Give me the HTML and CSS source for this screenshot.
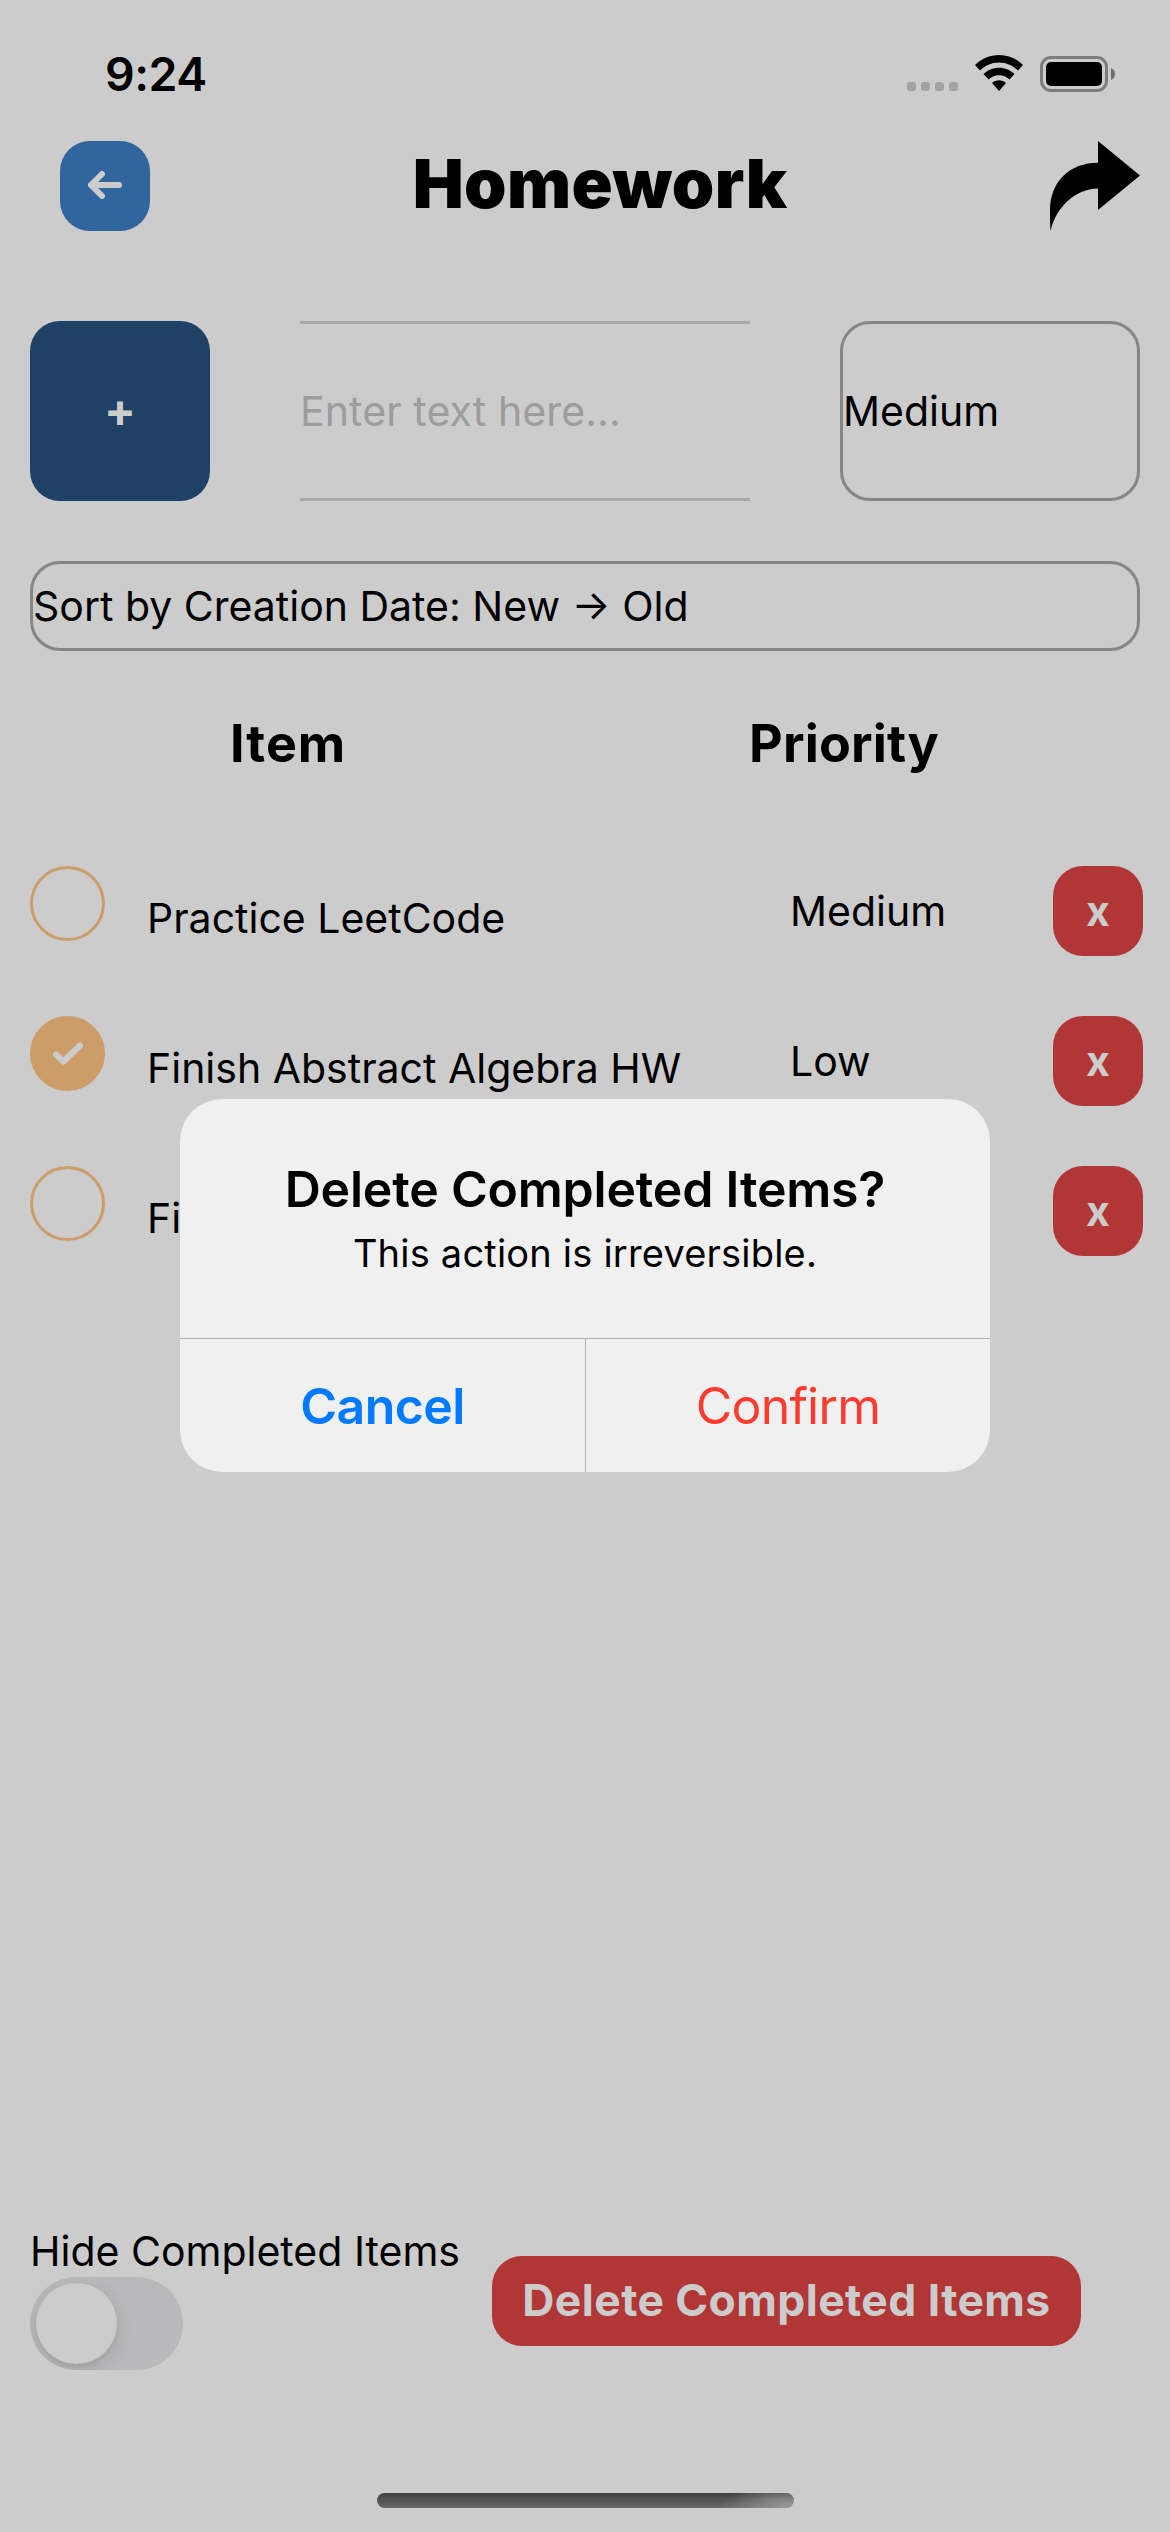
FILE: index.html
```html
<!DOCTYPE html>
<html lang="en">
<head>
<meta charset="utf-8">
<title>Homework</title>
<link rel="stylesheet" href="styles.css">
</head>
<body>
<div class="screen">
  <header class="status">
    <span class="time">9:24</span>
    <div class="indicators">
      <div class="signal"><i></i><i></i><i></i><i></i></div>
      <svg class="wifi" viewBox="0 0 48 36"><path d="M24 0C33 0 41.500 3.500 48 10L43 15.500C38 10.500 31.500 7.500 24 7.500S10 10.500 5 15.500L0 10C6.500 3.500 15 0 24 0ZM24 12.700C30 12.700 35.500 15 39.500 19L34.500 24.500C31.500 21.700 28 20.200 24 20.200S16.500 21.700 13.500 24.500L8.500 19C12.500 15 18 12.700 24 12.700ZM24 25.200C26.700 25.200 29 26.200 31 28L24 36L17 28C19 26.200 21.300 25.200 24 25.200Z"/></svg>
      <div class="battery"><i class="cell"><b></b></i><svg class="nub" viewBox="0 0 4 12"><path d="M0 0C5.300 2 5.300 10 0 12Z"/></svg></div>
    </div>
  </header>
  <div class="titlebar">
    <button class="back"><svg viewBox="0 0 34 28"><path d="M3 14H31M14 3L3 14L14 25"/></svg></button>
    <h1>Homework</h1>
    <svg class="share" viewBox="0 0 90 90"><path d="M48 0L90 34.500L48 69V47.500C25 48 6 66 .6 90C0 83 0 77 0 70C0 40 20 21.700 48 21.700Z"/></svg>
  </div>
  <div class="entry">
    <button class="add">+</button>
    <div class="field">Enter text here...</div>
    <div class="picker">Medium</div>
  </div>
  <div class="sort">Sort by Creation Date: New → Old</div>
  <div class="heads"><h2 class="h-item">Item</h2><h2 class="h-prio">Priority</h2></div>
  <ul class="list">
    <li><span class="check"></span><span class="name">Practice LeetCode</span><span class="prio">Medium</span><button class="del">x</button></li>
    <li><span class="check done"><svg viewBox="0 0 30 23"><path d="M3 12.500L10.500 19.500L27 3.500"/></svg></span><span class="name">Finish Abstract Algebra HW</span><span class="prio">Low</span><button class="del">x</button></li>
    <li><span class="check"></span><span class="name">Fi</span><span class="prio"></span><button class="del">x</button></li>
  </ul>
  <footer class="footer">
    <div class="hide"><span class="hide-label">Hide Completed Items</span><span class="toggle"><i></i></span></div>
    <button class="clear">Delete Completed Items</button>
  </footer>
  <div class="home"></div>
</div>
<div class="overlay">
  <div class="alert">
    <div class="message"><h3>Delete Completed Items?</h3><p>This action is irreversible.</p></div>
    <div class="actions"><button class="cancel">Cancel</button><button class="confirm">Confirm</button></div>
  </div>
</div>
</body>
</html>
```
FILE: styles.css
```css
* { box-sizing: border-box; margin: 0; padding: 0; }
body { width: 1170px; height: 2532px; background: #ccc; color: #000; font-family: Inter, "Liberation Sans", sans-serif; font-size: 41px; overflow: hidden; }
button { border: 0; font: inherit; color: #ccc; display: flex; align-items: center; justify-content: center; flex: none; }
.screen { width: 1170px; height: 2532px; display: flex; flex-direction: column; }
.status { height: 141px; padding: 47px 55px 0 105px; display: flex; justify-content: space-between; align-items: flex-start; }
.time { font-size: 46.500px; font-weight: 600; line-height: 54px; letter-spacing: -.5px; }
.indicators { display: flex; align-items: flex-start; padding-top: 8px; }
.signal { display: flex; gap: 5px; padding-top: 27px; margin-right: 17px; }
.signal i { width: 9px; height: 9px; border-radius: 3px; background: #a3a3a3; }
.wifi { width: 48px; height: 36px; margin-right: 17px; }
.battery { display: flex; align-items: center; gap: 3px; padding-top: 1px; }
.cell { width: 68px; height: 36px; border: 3px solid #7c7c7c; border-radius: 11px; padding: 3px; display: block; }
.cell b { display: block; height: 24px; border-radius: 5px; background: #000; }
.nub { width: 4px; height: 12px; fill: #6f6f6f; }
.titlebar { height: 90px; padding: 0 30px 0 60px; display: flex; justify-content: space-between; }
.back { width: 90px; height: 90px; border-radius: 30px; background: #31659d; }
.back svg { width: 34px; height: 28px; margin-top: -2px; fill: none; stroke: #ccc; stroke-width: 6; stroke-linecap: round; stroke-linejoin: round; }
h1 { font-size: 68px; font-weight: 900; line-height: 84px; letter-spacing: .4px; }
.share { width: 90px; height: 90px; }
.entry { margin-top: 90px; height: 180px; padding: 0 30px; display: flex; justify-content: space-between; }
.add { width: 180px; border-radius: 30px; background: #1f4165; font-size: 47px; font-weight: 700; padding-bottom: 3px; }
.field { width: 450px; border: solid #a8a8a8; border-width: 3px 0; color: #9d9d9d; line-height: 174px; letter-spacing: .1px; }
.picker { width: 300px; border: 3px solid #868686; border-radius: 30px; line-height: 174px; }
.sort { margin: 60px 30px 0; height: 90px; border: 3px solid #868686; border-radius: 30px; line-height: 84px; }
.heads { display: flex; margin-top: 60px; height: 66px; }
.heads h2 { font-size: 52px; font-weight: 700; line-height: 66px; letter-spacing: .2px; }
.heads .h-item { width: 520px; padding-left: 230px; letter-spacing: 1px; }
.h-prio { padding-left: 229px; }
.list { list-style: none; margin-top: 89px; display: grid; gap: 60px; }
.list li { height: 90px; padding: 0 27px 0 30px; display: flex; }
.check { width: 75px; height: 75px; border: 3px solid #cc9c69; border-radius: 50%; flex: none; display: flex; align-items: center; justify-content: center; }
.done { background: #cc9c69; }
.check svg { width: 30px; height: 23px; fill: none; stroke: #ccc; stroke-width: 6; stroke-linejoin: round; stroke-linecap: round; }
.name { width: 643px; margin-left: 42px; line-height: 104px; }
.prio { flex: 1; line-height: 90px; }
.del { width: 90px; height: 90px; border-radius: 30px; background: #b13636; font-weight: 700; }
.footer { margin-top: auto; padding: 0 89px 0 30px; display: flex; justify-content: space-between; }
.hide-label { display: block; line-height: 48px; padding-bottom: 2px; }
.toggle { display: block; width: 153px; height: 93px; border-radius: 47px; background: #b9b9bb; padding: 6px; overflow: hidden; }
.toggle i { display: block; width: 81px; height: 81px; border-radius: 50%; background: #ccc; box-shadow: 0 6px 18px rgba(0,0,0,.12), 0 3px 3px rgba(0,0,0,.04); }
.clear { width: 589px; height: 90px; margin-top: 29px; padding-bottom: 2px; border-radius: 30px; background: #b13636; font-size: 44.500px; font-weight: 700; letter-spacing: .4px; }
.home { width: 417px; height: 15px; border-radius: 8px; margin: 123px auto 24px; background: radial-gradient(ellipse 75px 24px at 100% 100%, #949494 15%, transparent), linear-gradient(#404040, #686868); }
.overlay { position: absolute; inset: 0; display: flex; justify-content: center; align-items: flex-start; padding-top: 1099px; }
.alert { width: 810px; height: 373px; border-radius: 42px; background: #f0f0f0; overflow: hidden; }
.message { height: 240px; padding-top: 57px; text-align: center; border-bottom: 1px solid #b0b0b0; }
.message h3 { font-size: 50px; font-weight: 600; line-height: 66px; letter-spacing: -.2px; }
.message p { font-size: 38px; line-height: 62px; letter-spacing: .2px; }
.actions { display: grid; grid-template-columns: 406px 404px; height: 133px; }
.actions button { background: none; font-size: 50px; }
.actions .cancel { color: #007aff; font-weight: 600; letter-spacing: -.6px; border-right: 1px solid #b0b0b0; }
.actions .confirm { color: #ff3b30; letter-spacing: -.8px; }
```
